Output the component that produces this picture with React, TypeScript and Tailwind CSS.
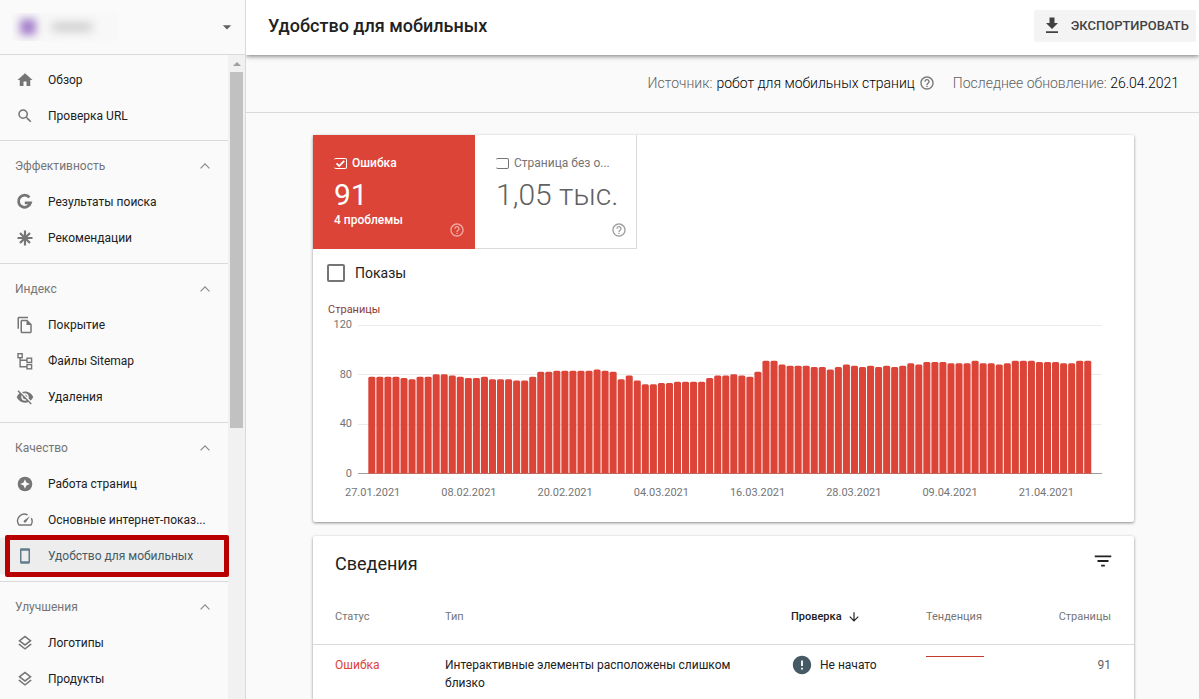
import type { ReactNode } from "react";
import {
  MdArrowDownward,
  MdArrowDropDown,
  MdError,
  MdFilterList,
  MdHelpOutline,
  MdHome,
  MdOutlineFileCopy,
  MdOutlineLayers,
  MdSearch,
  MdVisibilityOff,
} from "react-icons/md";

const GoogleIcon = () => (
  <svg viewBox="0 0 18 18" className="size-[18px]" fill="none" stroke="currentColor" strokeWidth="2.8">
    <path d="M13.4 4.4A6.1 6.1 0 1 0 14.500 9.900H8.800" />
  </svg>
);

const AsteriskIcon = () => (
  <svg viewBox="0 0 18 18" className="size-[18px]" stroke="currentColor" strokeWidth="2.2">
    <path d="M9 1.500v15M1.500 9h15M4 4l10 10M14 4L4 14" />
  </svg>
);

const SitemapIcon = () => (
  <svg viewBox="0 0 18 18" className="size-[18px]" fill="none" stroke="currentColor" strokeWidth="1.4">
    <rect x="2" y="1.7" width="4.2" height="4" />
    <rect x="11" y="6.2" width="4.6" height="4.2" />
    <rect x="11" y="12.6" width="4.6" height="4.2" />
    <path d="M4.1 5.7v9h6.9M4.1 8.3H11" />
  </svg>
);

const ExperienceIcon = () => (
  <svg viewBox="0 0 18 18" className="size-[18px]">
    <circle cx="9" cy="9" r="7.3" fill="currentColor" />
    <path d="M9 4.2l1.4 3.4L13.8 9l-3.4 1.4L9 13.8l-1.4-3.4L4.2 9l3.4-1.4z" fill="#fafafa" />
  </svg>
);

const SpeedIcon = () => (
  <svg viewBox="0 0 18 18" className="size-[18px]" fill="none" stroke="currentColor" strokeWidth="1.4">
    <path d="M11.6 3.9A6.8 6.8 0 0 0 3 14h12a6.8 6.8 0 0 0 .3-6.9" />
    <path d="M13.9 5.3L8 9.4a1.3 1.3 0 1 0 1.9 1.8z" fill="currentColor" stroke="none" />
  </svg>
);

const PhoneIcon = () => (
  <svg viewBox="0 0 18 18" className="size-[18px] text-[#607d8b]">
    <path
      d="M5.2 1.3h7.6c.7 0 1.2.5 1.2 1.2v13c0 .7-.5 1.2-1.2 1.2H5.2c-.7 0-1.2-.5-1.2-1.2v-13c0-.7.5-1.2 1.2-1.2zm.3 2.5v10.4h7V3.8z"
      fill="currentColor"
      fillRule="evenodd"
    />
  </svg>
);

const Chevron = () => (
  <svg viewBox="0 0 10 6" className="h-1.5 w-2.5" fill="none" stroke="#8a8a8a" strokeWidth="1.2">
    <path d="M.6 5.3L5 .9l4.4 4.4" />
  </svg>
);

const DownloadIcon = () => (
  <svg viewBox="0 0 14 17" className="h-[17px] w-3.5" fill="#424242">
    <path d="M4.500 .5h5v5.500H13L7 12 1 6h3.500zM1 14.200h12v1.800H1z" />
  </svg>
);

type Item = { label: string; icon: ReactNode; current?: boolean };

const mainItems: Item[] = [
  { label: "Обзор", icon: <MdHome className="size-[18px]" /> },
  { label: "Проверка URL", icon: <MdSearch className="size-[18px]" /> },
];

const sections: { title: string; items: Item[] }[] = [
  {
    title: "Эффективность",
    items: [
      { label: "Результаты поиска", icon: <GoogleIcon /> },
      { label: "Рекомендации", icon: <AsteriskIcon /> },
    ],
  },
  {
    title: "Индекс",
    items: [
      { label: "Покрытие", icon: <MdOutlineFileCopy className="size-[18px]" /> },
      { label: "Файлы Sitemap", icon: <SitemapIcon /> },
      { label: "Удаления", icon: <MdVisibilityOff className="size-[18px]" /> },
    ],
  },
  {
    title: "Качество",
    items: [
      { label: "Работа страниц", icon: <ExperienceIcon /> },
      { label: "Основные интернет-показ...", icon: <SpeedIcon /> },
      { label: "Удобство для мобильных", icon: <PhoneIcon />, current: true },
    ],
  },
  {
    title: "Улучшения",
    items: [
      { label: "Логотипы", icon: <MdOutlineLayers className="size-[18px]" /> },
      { label: "Продукты", icon: <MdOutlineLayers className="size-[18px]" /> },
    ],
  },
];

function NavItem({ label, icon, current }: Item) {
  return (
    <li className="relative">
      <a
        href="#"
        aria-current={current ? "page" : undefined}
        className={
          current
            ? "flex h-9 items-center gap-3.5 bg-[#ededed] pr-4 pl-4 text-[#455a64]"
            : "flex h-9 items-center gap-3.5 pr-4 pl-4 text-[#212121]"
        }
      >
        <span className="shrink-0 text-[#757575]">{icon}</span>
        <span className="truncate">{label}</span>
      </a>
      {current && (
        <span className="pointer-events-none absolute -inset-y-[3px] -right-px left-[5px] z-10 rounded-xs border-[5px] border-[#b80000]" />
      )}
    </li>
  );
}

function Sidebar() {
  return (
    <aside className="relative z-10 flex w-[246px] shrink-0 flex-col border-r border-[#dadada] bg-[#fafafa] text-xs">
      <div className="flex h-[55px] shrink-0 items-center border-b border-[#dadada] pr-2 pl-3">
        <div className="flex h-7 w-[106px] items-center overflow-hidden bg-[#f8f8f8] pl-2">
          <span className="size-4 rounded-xs bg-[#a37fca] blur-[4px]" />
          <span className="ml-4 h-2 w-10 bg-[#c8c8c8] blur-[5px]" />
        </div>
        <button type="button" aria-label="Выбрать ресурс" className="ml-auto text-[#616161]">
          <MdArrowDropDown className="size-5" />
        </button>
      </div>
      <div className="flex min-h-0 flex-1">
        <nav className="min-w-0 flex-1">
          <ul className="border-b border-[#dadada] pt-[7px] pb-1.5">
            {mainItems.map((item) => (
              <NavItem key={item.label} {...item} />
            ))}
          </ul>
          {sections.map((section) => (
            <section key={section.title} className="border-b border-[#dadada] py-[7px]">
              <button
                type="button"
                className="flex h-9 w-full items-center justify-between pr-[18px] pl-[15px] text-[#757575]"
              >
                {section.title}
                <Chevron />
              </button>
              <ul>
                {section.items.map((item) => (
                  <NavItem key={item.label} {...item} />
                ))}
              </ul>
            </section>
          ))}
        </nav>
        <div className="flex w-[17px] shrink-0 flex-col items-center bg-[#f1f1f1]">
          <span className="flex h-[17px] items-center">
            <svg viewBox="0 0 8 4" className="h-1 w-2" fill="#a0a0a0">
              <path d="M0 4l4-4 4 4z" />
            </svg>
          </span>
          <span className="h-[356px] w-[13px] bg-[#c1c1c1]" />
        </div>
      </div>
    </aside>
  );
}

const values = [
  78, 78, 78, 78, 77, 76, 78, 78, 80, 80, 79, 78, 77, 77, 78, 76, 76, 76, 75, 75, 78, 82, 82, 83, 83, 83, 83, 83, 84,
  83, 82, 76, 79, 75, 72, 72, 73, 73, 74, 74, 74, 74, 77, 79, 79, 80, 79, 78, 82, 91, 91, 88, 87, 87, 87, 86, 86, 84,
  86, 88, 87, 86, 87, 86, 87, 86, 87, 89, 88, 90, 90, 90, 89, 89, 89, 91, 89, 89, 88, 89, 91, 91, 91, 90, 90, 90, 89,
  89, 91, 91,
];

const dates = [
  "27.01.2021",
  "08.02.2021",
  "20.02.2021",
  "04.03.2021",
  "16.03.2021",
  "28.03.2021",
  "09.04.2021",
  "21.04.2021",
];

const STEP = 8.033;
const SCALE = 148 / 120;

function barPath(value: number, index: number) {
  const x = 10.3 + index * STEP;
  const top = 148 - value * SCALE;
  return `M${x} 148V${top + 1.5}q0-1.500 1.500-1.500h4.030q1.500 0 1.500 1.500V148z`;
}

function Chart() {
  return (
    <figure className="px-[15px] pb-[21px] text-[11px] text-[#757575]">
      <figcaption className="h-4 leading-[18px] text-[#8c3a30]">Страницы</figcaption>
      <div className="flex">
        <div className="flex h-[165px] w-[29px] flex-col justify-between pr-[5px] text-right leading-4">
          <span>120</span>
          <span>80</span>
          <span>40</span>
          <span>0</span>
        </div>
        <div className="min-w-0 flex-1 pt-2 pr-[17px] pl-px">
          <svg viewBox="0 0 743 149" preserveAspectRatio="none" className="h-[149px] w-full">
            <path d="M0 .5h743M0 49.500h743M0 99.500h743" stroke="#ebebeb" />
            <g fill="#db4437">
              {values.map((value, index) => (
                <path key={index} d={barPath(value, index)} />
              ))}
            </g>
            <path d="M0 148.500h743" stroke="#9e9e9e" />
            <path d="M10 148.500h723" stroke="#db4437" strokeOpacity=".6" />
          </svg>
        </div>
      </div>
      <div className="flex justify-between pt-[3px] pr-[45px] pl-[17px] leading-4">
        {dates.map((date) => (
          <span key={date}>{date}</span>
        ))}
      </div>
    </figure>
  );
}

function Summary() {
  return (
    <section className="rounded-xs bg-white shadow-[0_1px_3px_rgba(0,0,0,0.45)]">
      <div className="flex">
        <div className="relative h-[114px] w-[162px] bg-[#db4437] px-[21px] pt-[19px] text-white">
          <label className="flex items-center gap-[5px] text-xs leading-[18px] font-medium">
            <span className="relative flex">
              <input
                type="checkbox"
                defaultChecked
                className="h-[11px] w-[13px] appearance-none rounded-xs border border-l-0 border-white"
              />
              <svg
                viewBox="0 0 13 11"
                className="pointer-events-none absolute inset-0"
                fill="none"
                stroke="currentColor"
                strokeWidth="1.8"
              >
                <path d="M2.500 5.300l2.700 2.700 5-5.200" />
              </svg>
            </span>
            Ошибка
          </label>
          <p className="mt-1.5 text-3xl leading-[34px]">91</p>
          <p className="text-xs leading-4 font-medium">4 проблемы</p>
          <MdHelpOutline className="absolute right-2.5 bottom-[11px] size-4 text-[#f0aaa4]" />
        </div>
        <div className="relative h-[114px] w-[162px] border-r border-b border-[#dadada] pt-[19px] pl-[21px] text-[#757575]">
          <label className="flex items-center gap-[5px] text-xs leading-[18px]">
            <input
              type="checkbox"
              className="h-[11px] w-[13px] shrink-0 appearance-none rounded-xs border border-l-0 border-[#757575]"
            />
            <span className="whitespace-nowrap">Страница без о...</span>
          </label>
          <p className="mt-1.5 text-3xl leading-[34px] font-light whitespace-nowrap text-[#616161]">1,05 тыс.</p>
          <MdHelpOutline className="absolute right-[9px] bottom-2.5 size-4 text-[#9e9e9e]" />
        </div>
      </div>
      <label className="flex h-[52px] items-center gap-2.5 pb-1 pl-3.5 text-sm text-[#212121]">
        <input type="checkbox" className="size-[18px] appearance-none rounded-xs border-2 border-[#757575]" />
        Показы
      </label>
      <Chart />
    </section>
  );
}

function Details() {
  return (
    <section className="mt-3.5 h-[240px] rounded-xs bg-white shadow-[0_1px_3px_rgba(0,0,0,0.45)]">
      <div className="flex h-[55px] items-start justify-between pr-5 pl-[22px]">
        <h2 className="text-lg leading-[55px] text-[#212121]">Сведения</h2>
        <button type="button" aria-label="Фильтр" className="pt-3.5 text-[#212121]">
          <MdFilterList className="size-[22px]" />
        </button>
      </div>
      <table className="w-full table-fixed text-left text-xs text-[#212121]">
        <thead className="text-[11px] text-[#757575]">
          <tr className="h-[53px] border-b border-[#dadada]">
            <th className="w-[132px] pl-[22px] font-normal">Статус</th>
            <th className="font-normal">Тип</th>
            <th className="w-[135px] font-medium text-[#212121]">
              <span className="flex items-center gap-[5px]">
                Проверка <MdArrowDownward className="size-3.5" />
              </span>
            </th>
            <th className="w-[100px] font-normal">Тенденция</th>
            <th className="w-[108px] pr-[23px] text-right font-normal">Страницы</th>
          </tr>
        </thead>
        <tbody>
          <tr className="align-top">
            <td className="pt-[11px] pl-[22px] leading-[18px] text-[#db4437]">Ошибка</td>
            <td className="pt-[11px] pr-10 leading-[18px]">Интерактивные элементы расположены слишком близко</td>
            <td className="pt-[9px]">
              <span className="flex items-center gap-[7px] leading-5">
                <MdError className="size-[22px] text-[#455a64]" /> Не начато
              </span>
            </td>
            <td className="pt-[11px]">
              <span className="block h-px w-[58px] bg-[#c5392f]" />
            </td>
            <td className="pt-[11px] pr-[23px] text-right leading-[18px] text-[#616161]">91</td>
          </tr>
        </tbody>
      </table>
    </section>
  );
}

export default function App() {
  return (
    <div className="flex h-screen overflow-hidden bg-[#fafafa] font-[Roboto,sans-serif]">
      <Sidebar />
      <div className="flex min-w-0 flex-1 flex-col">
        <header className="relative flex h-[55px] shrink-0 items-center justify-between bg-white pr-[3px] pb-1 pl-[22px] shadow-[0_1px_5px_rgba(0,0,0,0.55)]">
          <h1 className="text-lg font-medium text-[#212121]">Удобство для мобильных</h1>
          <button
            type="button"
            className="flex h-8 items-center gap-3 rounded-xs bg-[#f4f4f4] pr-[7px] pl-[11px] text-[13px] font-medium text-[#424242]"
          >
            <DownloadIcon />
            ЭКСПОРТИРОВАТЬ
          </button>
        </header>
        <div className="flex h-[58px] shrink-0 items-center justify-end gap-[18px] border-b border-[#dadada] pr-5 pb-0.5 text-sm font-light text-[#616161]">
          <p className="flex items-center gap-1">
            Источник: <span className="text-black">робот для мобильных страниц</span>
            <MdHelpOutline className="size-4 text-[#757575]" />
          </p>
          <p>
            Последнее обновление: <span className="text-black">26.04.2021</span>
          </p>
        </div>
        <main className="flex-1 overflow-hidden pt-[22px] pr-[65px] pl-[67px]">
          <Summary />
          <Details />
        </main>
      </div>
    </div>
  );
}
